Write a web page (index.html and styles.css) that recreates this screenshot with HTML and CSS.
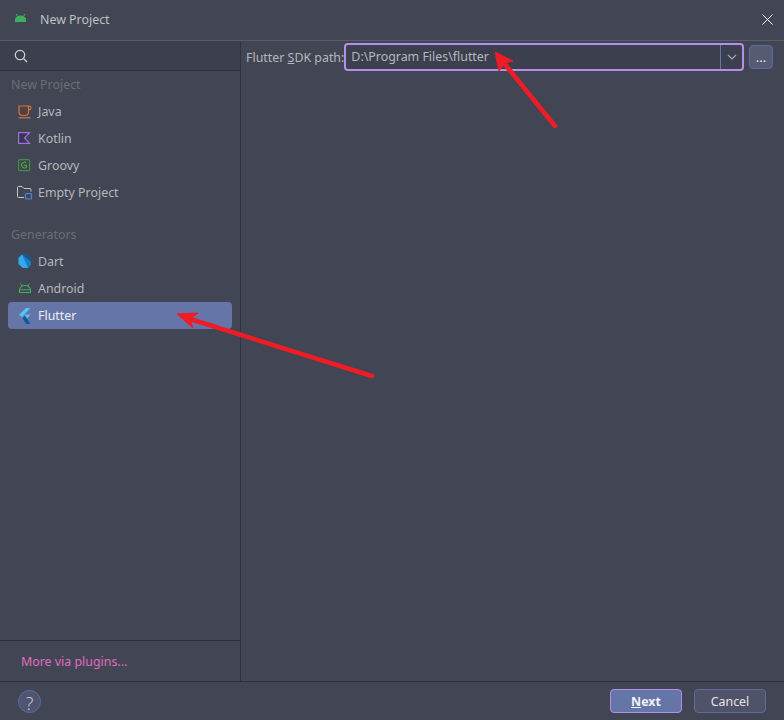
FILE: index.html
```html
<!DOCTYPE html>
<html lang="en">
<head>
<meta charset="utf-8">
<title>New Project</title>
<link rel="stylesheet" href="styles.css">
</head>
<body>
<div class="dialog">
  <header class="titlebar">
    <svg class="title-icon" width="11" height="8" viewBox="0 0 11 8"><path fill="#3fae5e" d="M0 8V5.500a5.500 4 0 0 1 11 0V8z"/><path stroke="#3fae5e" d="M2.500 2.500 1.200 0M8.500 2.500 9.800 0"/></svg>
    <span class="title-text">New Project</span>
    <svg class="close" width="11" height="11" viewBox="0 0 11 11"><path stroke="#fff" stroke-width="1" fill="none" d="M.5.5l10 10M10.500.5l-10 10"/></svg>
  </header>
  <main class="content">
    <aside class="sidebar">
      <div class="search">
        <svg width="14" height="14" viewBox="0 0 14 14"><circle cx="6" cy="6" r="4.700" fill="none" stroke="#cfd1d6" stroke-width="1.200"/><path d="M9.500 9.500L13 13" stroke="#cfd1d6" stroke-width="1.200"/></svg>
      </div>
      <div class="list">
        <div class="group first">New Project</div>
        <div class="item">
          <svg class="icon" width="14" height="14" viewBox="0 0 14 14"><path d="M1 1h9.500v6a3.500 3.500 0 0 1-3.500 3.500H4.500A3.500 3.500 0 0 1 1 7z" fill="#54413c" stroke="#c9794a" stroke-width="1.200"/><path d="M10.500 1.200h2.300v3.300h-2.300" fill="none" stroke="#c9794a"/><path d="M0.500 12.800h12" stroke="#c9794a" stroke-width="1.200"/></svg>
          <span>Java</span>
        </div>
        <div class="item">
          <svg class="icon" width="14" height="14" viewBox="0 0 14 14"><path d="M.6.6H11.500L6.500 6l5 5.400H.6z" fill="#3a3550" stroke="#9d6fe0" stroke-width="1.200"/></svg>
          <span>Kotlin</span>
        </div>
        <div class="item">
          <svg class="icon" width="14" height="14" viewBox="0 0 14 14"><rect x=".6" y=".6" width="11" height="11" rx="1" fill="#3a4a3f" stroke="#3f8f4b" stroke-width="1.200"/><path d="M8.500 3.800A3 3 0 1 0 8.600 8.200V6.200H6.200" fill="none" stroke="#5fae6a" stroke-width="1"/></svg>
          <span>Groovy</span>
        </div>
        <div class="item">
          <svg class="icon empty-icon" width="16" height="15" viewBox="0 0 16 15"><path d="M7 12.500H1.500a1 1 0 0 1-1-1v-9a1 1 0 0 1 1-1h3.500l2 2h6a1 1 0 0 1 1 1v2" fill="none" stroke="#c6c8cc"/><rect x="8.500" y="8.500" width="6" height="5.500" rx="1" fill="#434654" stroke="#4f86e0" stroke-width="1.200"/></svg>
          <span>Empty Project</span>
        </div>
        <div class="group">Generators</div>
        <div class="item">
          <svg class="icon" width="14" height="15" viewBox="0 0 14 15"><path d="M4 .5h5l4 4v6l-3 3.500H5l-4.500-4V4z" fill="#1c7cc4"/><path d="M4 .5 10 14H5l-4.500-4V4z" fill="#35a8ee"/><path d="M4 .5h5l4 4v3z" fill="#12578f"/></svg>
          <span>Dart</span>
        </div>
        <div class="item">
          <svg class="icon" width="13" height="11" viewBox="0 0 13 11"><path d="M1 9.500V7a5.500 4.500 0 0 1 11 0v2.500z" fill="none" stroke="#3fae5e" stroke-width="1.100"/><path d="M3.500 3 2 .5M9.500 3 11 .5" stroke="#3fae5e"/><path d="M.5 6.800h12" stroke="#3fae5e"/></svg>
          <span>Android</span>
        </div>
        <div class="item selected">
          <svg class="icon" width="14" height="16" viewBox="0 0 14 16"><path d="M8 0h4.500L4 9 1 7z" fill="#56c4f5"/><path d="M7.500 6.500H12.500L7.500 12 4.500 10z" fill="#56c4f5"/><path d="M4.500 10l2.500-2.500 5.500 8.500H8z" fill="#0d5a9e"/></svg>
          <span>Flutter</span>
        </div>
      </div>
      <div class="plugins"><span class="plugins-link">More via plugins...</span></div>
    </aside>
    <section class="panel">
      <div class="sdk-row">
        <label class="sdk-label">Flutter <u>S</u>DK path:</label>
        <div class="combo">
          <span class="combo-value">D:\Program Files\flutter</span>
          <span class="combo-arrow">
            <svg width="10" height="6" viewBox="0 0 10 6"><path d="M1 1l4 4 4-4" fill="none" stroke="#a9abb2" stroke-width="1.100"/></svg>
          </span>
        </div>
        <button class="browse">...</button>
      </div>
    </section>
  </main>
  <footer class="footer">
    <button class="help">?</button>
    <div class="actions">
      <button class="btn primary"><u>N</u>ext</button>
      <button class="btn">Cancel</button>
    </div>
  </footer>
</div>
<svg class="arrows" width="784" height="720" viewBox="0 0 784 720">
  <path d="M555 126 503 62" stroke="#ee1c25" stroke-width="4.600" stroke-linecap="round"/>
  <path d="M495 52 513 61 505 63 499 71z" fill="#ee1c25" stroke="#ee1c25" stroke-linejoin="round"/>
  <path d="M372 376 190 319" stroke="#ee1c25" stroke-width="4.600" stroke-linecap="round"/>
  <path d="M177 314 198 313 190 319 193 328z" fill="#ee1c25" stroke="#ee1c25" stroke-linejoin="round"/>
</svg>
</body>
</html>
```
FILE: styles.css
```css
* { box-sizing: border-box; }
html, body { margin: 0; padding: 0; }
body {
  width: 784px;
  height: 720px;
  overflow: hidden;
  background: #424553;
  color: #c4c6cc;
  font-family: "Noto Sans", "Open Sans", sans-serif;
  font-size: 12.4px;
  position: relative;
}
.dialog { display: flex; flex-direction: column; height: 720px; }
.titlebar {
  height: 41px;
  flex: none;
  display: flex;
  align-items: center;
  padding: 0 11px 1px 15px;
  border-bottom: 1px solid #5a5c66;
}
.title-icon { margin-right: 14px; margin-top: -3px; }
.title-text { color: #bfc1c7; }
.close { margin-left: auto; }
.content { flex: 1; display: flex; min-height: 0; }
.sidebar {
  width: 241px;
  flex: none;
  display: flex;
  flex-direction: column;
  border-right: 1px solid #31333e;
}
.search {
  height: 30px;
  flex: none;
  display: flex;
  align-items: center;
  padding-left: 14px;
  background: #3c3f4d;
  border-bottom: 1px solid #2f313b;
}
.list { flex: 1; padding: 0 8px; }
.group {
  height: 27px;
  margin-top: 15px;
  padding: 0 0 1px 3px;
  display: flex;
  align-items: center;
  color: #6b6e76;
}
.group.first { margin-top: 0; }
.item {
  height: 27px;
  display: flex;
  align-items: center;
  padding-left: 10px;
  border-radius: 4px;
  color: #b5b7bd;
}
.icon { width: 14px; margin-right: 6px; flex: none; overflow: visible; }
.item .empty-icon { width: 16px; margin-left: -1px; margin-right: 5px; }
.selected { background: #6575a8; color: #eceef3; }
.plugins {
  height: 41px;
  flex: none;
  display: flex;
  align-items: center;
  padding-left: 21px;
  border-top: 1px solid #2f313b;
}
.plugins-link { color: #e06cc0; }
.panel { flex: 1; padding: 2px 6px 0 5px; }
.sdk-row { display: flex; align-items: center; height: 28px; }
.sdk-label { color: #b5b7bd; white-space: nowrap; }
.combo {
  flex: 1;
  height: 28px;
  display: flex;
  align-items: stretch;
  border: 2px solid #b48ee8;
  border-radius: 4px;
  background: #3c3f4d;
  margin-right: 5px;
}
.combo-value { flex: 1; padding-left: 5px; line-height: 23px; color: #b5b7bd; }
.combo-arrow {
  width: 22px;
  display: flex;
  align-items: center;
  justify-content: center;
  border-left: 1px solid #6575a8;
}
.browse {
  width: 24px;
  height: 24px;
  padding: 0;
  margin-right: 5px;
  background: #565a72;
  border: 1px solid #5d6c9c;
  border-radius: 4px;
  color: #e8e8ec;
  font: 13px "Noto Sans", sans-serif;
}
.footer {
  height: 39px;
  flex: none;
  display: flex;
  align-items: center;
  padding: 0 18px;
  border-top: 1px solid #2f313b;
}
.help {
  width: 23px;
  height: 23px;
  padding: 0;
  border: 1px solid #5d6c9c;
  border-radius: 50%;
  background: #4f5570;
  color: #c4c6cc;
  font: 300 18px "Noto Sans", sans-serif;
}
.actions { margin-left: auto; display: flex; gap: 12px; }
.btn {
  width: 72px;
  height: 24px;
  padding: 0;
  border: 1px solid #5d6c9c;
  border-radius: 4px;
  background: #4f5268;
  color: #e4e6ea;
  font: 12.4px "Noto Sans", sans-serif;
}
.primary {
  background: #6575a8;
  border-color: #b48ee8;
  color: #f0f1f5;
  font-weight: 700;
}
.arrows { position: absolute; left: 0; top: 0; pointer-events: none; }
```
